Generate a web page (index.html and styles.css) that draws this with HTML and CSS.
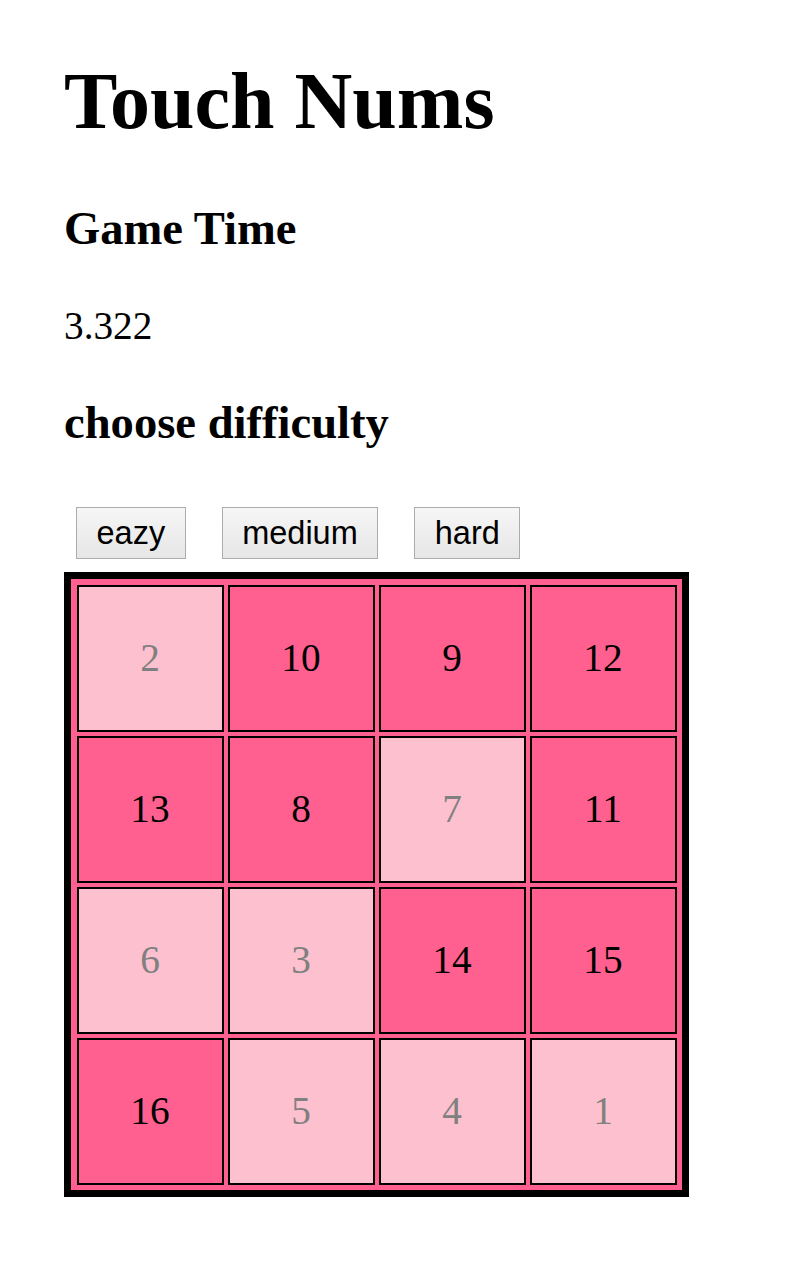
FILE: index.html
```html
<!DOCTYPE html>
<html>
<head>
<meta charset="utf-8">
<title>Touch Nums</title>
<link rel="stylesheet" href="styles.css">
</head>
<body>
<div class="page">
  <h1 class="title">Touch Nums</h1>
  <h3 class="sub">Game Time</h3>
  <p class="time">3.322</p>
  <h3 class="sub">choose difficulty</h3>
  <div class="levels">
    <button class="btn">eazy</button>
    <button class="btn">medium</button>
    <button class="btn">hard</button>
  </div>
  <div class="board">
    <div class="cell done">2</div>
    <div class="cell">10</div>
    <div class="cell">9</div>
    <div class="cell">12</div>
    <div class="cell">13</div>
    <div class="cell">8</div>
    <div class="cell done">7</div>
    <div class="cell">11</div>
    <div class="cell done">6</div>
    <div class="cell done">3</div>
    <div class="cell">14</div>
    <div class="cell">15</div>
    <div class="cell">16</div>
    <div class="cell done">5</div>
    <div class="cell done">4</div>
    <div class="cell done">1</div>
  </div>
</div>
</body>
</html>
```
FILE: styles.css
```css
html, body {
  margin: 0;
  padding: 0;
  background: #fff;
}
.page {
  padding: 0 0 0 64px;
  font-family: "Liberation Serif", "Times New Roman", serif;
  color: #000;
}
.title {
  font-size: 80px;
  font-weight: bold;
  margin: 55px 0 0 0;
  line-height: 1.15;
}
.sub {
  font-size: 46.6px;
  font-weight: bold;
  margin: 0;
  line-height: 1.15;
}
.title + .sub {
  margin-top: 55px;
}
.time {
  font-size: 39.3px;
  margin: 48px 0 47px 0;
  line-height: 1.15;
}
.levels {
  display: flex;
  gap: 36px;
  padding-left: 12px;
  margin-top: 58px;
  margin-bottom: 13px;
}
.btn {
  font-family: "Liberation Sans", Arial, sans-serif;
  font-size: 32.5px;
  line-height: 37px;
  height: 52px;
  padding: 0 19.5px;
  border: 1px solid #acacac;
  border-radius: 0;
  background: linear-gradient(#f6f6f6, #e6e6e6);
  color: #000;
}
.board {
  display: grid;
  grid-template-columns: repeat(4, 151px);
  grid-auto-rows: 151px;
  width: max-content;
  border: 7px solid #000;
  padding: 3.5px;
  background: #ff6090;
}
.cell {
  margin: 2px;
  box-sizing: border-box;
  border: 2.5px solid #000;
  background: #ff6090;
  color: #000;
  font-size: 39.3px;
  display: flex;
  align-items: center;
  justify-content: center;
}
.cell.done {
  background: #fdc0cf;
  color: #808080;
}
```
